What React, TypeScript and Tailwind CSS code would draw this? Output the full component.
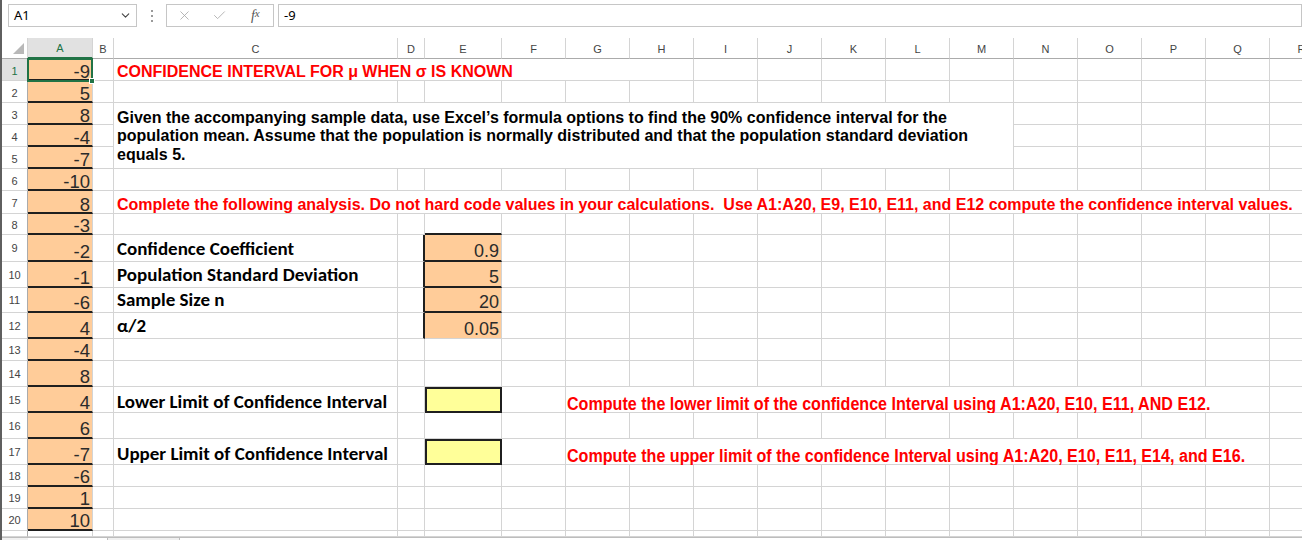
import { Check, ChevronDown, X } from 'lucide-react';

const COLS = ['A', 'B', 'C', 'D', 'E', 'F', 'G', 'H', 'I', 'J', 'K', 'L', 'M', 'N', 'O', 'P', 'Q', 'R'];
const SAMPLE = [-9, 5, 8, -4, -7, -10, 8, -3, -2, -1, -6, 4, -4, 8, 4, 6, -7, -6, 1, 10];

const PARAMS: Record<number, [string, string]> = {
  9: ['Confidence Coefficient', '0.9'],
  10: ['Population Standard Deviation', '5'],
  11: ['Sample Size n', '20'],
  12: ['α/2', '0.05'],
};

const LIMITS: Record<number, [string, string]> = {
  15: ['Lower Limit of Confidence Interval', 'Compute the lower limit of the confidence Interval using A1:A20, E10, E11, AND E12.'],
  17: ['Upper Limit of Confidence Interval', 'Compute the upper limit of the confidence Interval using A1:A20, E10, E11, E14, and E16.'],
};

// merged / overflowing ranges
const MERGES = [
  { r: 1, c: 2, rs: 1, cs: 6, span: 'col-span-6' },
  { r: 3, c: 2, rs: 3, cs: 11, span: 'col-span-11 row-span-3' },
  { r: 7, c: 2, rs: 1, cs: 16, span: 'col-span-16' },
  { r: 15, c: 6, rs: 1, cs: 11, span: 'col-span-11' },
  { r: 17, c: 6, rs: 1, cs: 11, span: 'col-span-11' },
];

const covered = (r: number, c: number) =>
  MERGES.some((m) => !(m.r === r && m.c === c) && r >= m.r && r < m.r + m.rs && c >= m.c && c < m.c + m.cs);

function Cell({ r, c }: { r: number; c: number }) {
  const merge = MERGES.find((m) => m.r === r && m.c === c);
  let right = 'border-r border-r-[#d4d4d4]';
  let bottom = 'border-b border-b-[#d4d4d4]';
  let bg = 'bg-white';
  let extra = '';
  let inner: React.ReactNode = null;

  if (c === 0 && r <= 20) {
    bg = 'bg-[#ffcc99]';
    bottom = 'border-b-2 border-b-[#1f1f1f]';
    inner = (
      <div
        className={`flex h-full items-end justify-end pr-[2px] font-['Liberation_Sans',Arial,sans-serif] text-[18.5px] text-[#2b2b2b] ${
          r <= 8 ? 'leading-[14px]' : 'leading-[16px]'
        }`}
      >
        {SAMPLE[r - 1]}
      </div>
    );
  }

  if (c === 3 && PARAMS[r]) right = 'border-r-2 border-r-[#1f1f1f]';
  if (c === 4 && r >= 8 && r <= 11) bottom = 'border-b-2 border-b-[#1f1f1f]';

  if (c === 2 && (PARAMS[r] || LIMITS[r])) {
    const label = PARAMS[r] ? PARAMS[r][0] : LIMITS[r][0];
    inner = (
      <div
        className={`flex h-full items-end whitespace-nowrap pl-[3px] font-['Carlito','Lato',sans-serif] text-[19px] font-bold leading-[20px] text-black ${
          LIMITS[r] ? 'pb-0' : 'pb-[2px]'
        }`}
      >
        {label}
      </div>
    );
  }

  if (c === 4 && PARAMS[r]) {
    bg = 'bg-[#ffcc99]';
    inner = (
      <div className="flex h-full items-end justify-end pr-[2px] font-['Liberation_Sans',Arial,sans-serif] text-[18px] leading-[17px] text-[#2b2b2b]">
        {PARAMS[r][1]}
      </div>
    );
  }

  if (c === 4 && LIMITS[r]) {
    bg = 'bg-[#ffff99]';
    right = 'border-r-2 border-r-[#1f1f1f]';
    bottom = 'border-b-2 border-b-[#1f1f1f]';
    extra = 'border-l-2 border-t-2 border-l-[#1f1f1f] border-t-[#1f1f1f]';
  }

  if (c === 6 && LIMITS[r]) {
    inner = (
      <div className="flex h-full items-end whitespace-nowrap pl-[1px] font-['Liberation_Sans',Arial,sans-serif] text-[18px] font-bold leading-[16px] text-[#ff0000]">
        <span className="inline-block origin-left scale-x-[0.894]">{LIMITS[r][1]}</span>
      </div>
    );
  }

  if (r === 1 && c === 2) {
    inner = (
      <div className="flex h-full items-end whitespace-nowrap pl-[3px] font-['Liberation_Sans',Arial,sans-serif] text-[16px] font-bold leading-[16px] text-[#ff0000]">
        CONFIDENCE INTERVAL FOR μ WHEN σ IS KNOWN
      </div>
    );
  }

  if (r === 3 && c === 2) {
    inner = (
      <div className="flex h-full flex-col justify-end whitespace-nowrap pb-[4px] pl-[3px] font-['Liberation_Sans',Arial,sans-serif] text-[16px] font-bold leading-[18.5px] text-black">
        <span>Given the accompanying sample data, use Excel’s formula options to find the 90% confidence interval for the</span>
        <span>population mean. Assume that the population is normally distributed and that the population standard deviation</span>
        <span>equals 5.</span>
      </div>
    );
  }

  if (r === 7 && c === 2) {
    inner = (
      <div className="flex h-full items-end whitespace-nowrap pl-[3px] font-['Liberation_Sans',Arial,sans-serif] text-[16px] font-bold leading-[16px] text-[#ff0000]">
        Complete the following analysis. Do not hard code values in your calculations.&nbsp; Use A1:A20, E9, E10, E11, and E12 compute the confidence interval values.
      </div>
    );
  }

  return (
    <div className={`relative min-w-0 ${merge ? merge.span : ''} ${bg} ${right} ${bottom} ${extra}`}>
      {inner}
      {r === 1 && c === 0 && (
        <div className="absolute -left-[1px] -top-[1px] z-10 h-[24px] w-[66px] border-2 border-[#217346]">
          <div className="absolute -bottom-[4px] -right-[4px] h-[6px] w-[6px] border border-white bg-[#217346]" />
        </div>
      )}
    </div>
  );
}

function RowHeader({ r }: { r: number }) {
  const active = r === 1;
  return (
    <div
      className={`flex items-center justify-center overflow-hidden border-b border-r border-b-[#d4d4d4] border-r-[#ababab] font-['Liberation_Sans',Arial,sans-serif] text-[11px] leading-[12px] ${
        active ? 'bg-[#e1e1e1] text-[#217346]' : 'bg-white text-[#444]'
      } ${r <= 8 ? 'pt-[2px]' : ''} ${r === 21 ? 'items-start pt-[4px]' : ''}`}
    >
      {r}
    </div>
  );
}

export default function App() {
  const rows: React.ReactNode[] = [];
  for (let r = 1; r <= 21; r++) {
    rows.push(<RowHeader key={`h${r}`} r={r} />);
    for (let c = 0; c < COLS.length; c++) {
      if (covered(r, c)) continue;
      rows.push(<Cell key={`${r}-${c}`} r={r} c={c} />);
    }
  }

  return (
    <div className="h-[540px] w-[1302px] overflow-hidden border-l-2 border-l-[#5f5f5f] bg-white">
      {/* formula bar */}
      <div className="flex h-[38px] items-start pl-[6px] pt-[4px] font-['Noto_Sans','Liberation_Sans',sans-serif]">
        <div className="flex h-[23px] w-[129px] items-center justify-between border border-[#c6c6c6] pl-[5px] pr-[4px] text-[13px] text-black">
          <span>A1</span>
          <ChevronDown size={13} strokeWidth={2} className="text-[#444]" />
        </div>
        <div className="flex h-[23px] w-[29px] flex-col items-center justify-center gap-[3px]">
          <span className="h-[2px] w-[2px] bg-[#9a9a9a]" />
          <span className="h-[2px] w-[2px] bg-[#9a9a9a]" />
          <span className="h-[2px] w-[2px] bg-[#9a9a9a]" />
        </div>
        <div className="flex h-[23px] w-[108px] items-center border border-[#c6c6c6]">
          <span className="flex w-[36px] justify-center">
            <X size={15} strokeWidth={1.3} className="text-[#a6a6a6]" />
          </span>
          <span className="flex w-[36px] justify-center">
            <Check size={15} strokeWidth={1.3} className="text-[#a6a6a6]" />
          </span>
          <span className="flex w-[36px] justify-center font-['Liberation_Serif',serif] text-[14px] italic text-[#555]">
            f<span className="text-[11px]">x</span>
          </span>
        </div>
        <div className="ml-[4px] flex h-[23px] flex-1 items-center border border-[#c6c6c6] pl-[5px] text-[13px] text-black">
          -9
        </div>
      </div>

      {/* sheet */}
      <div className="grid grid-cols-[26px_65px_21px_284px_27px_77px_repeat(13,64px)] grid-rows-[21px_22px_22px_22px_22px_22px_22px_23px_21px_27px_26px_25px_26px_22px_26px_26px_26px_26px_22px_22px_22px_6px]">
        <div className="relative border-b border-r border-b-[#ababab] border-r-[#d4d4d4] bg-white">
          <svg width="11" height="11" viewBox="0 0 11 11" className="absolute bottom-[4px] right-[3px]">
            <polygon points="11,0 11,11 0,11" fill="#b8b8b8" />
          </svg>
        </div>
        {COLS.map((col, i) => (
          <div
            key={col}
            className={`flex items-center justify-center pt-[2px] font-['Liberation_Sans',Arial,sans-serif] text-[11px] ${
              i === 0
                ? 'border-b-2 border-r border-b-[#217346] border-r-[#d4d4d4] bg-[#e1e1e1] text-[#217346]'
                : 'border-b border-r border-b-[#ababab] border-r-[#d4d4d4] bg-white text-[#444]'
            }`}
          >
            {col}
          </div>
        ))}
        {rows}
      </div>

      {/* sheet tab / scroll strip */}
      <div className="flex h-[3px] border-t border-t-[#bdbdbd] bg-[#f0f0f0]">
        <div className="ml-[26px] w-[80px] border-r border-r-[#bdbdbd] bg-white" />
        <div className="ml-[71px] flex-1 border-l border-l-[#bdbdbd] bg-white" />
      </div>
    </div>
  );
}
